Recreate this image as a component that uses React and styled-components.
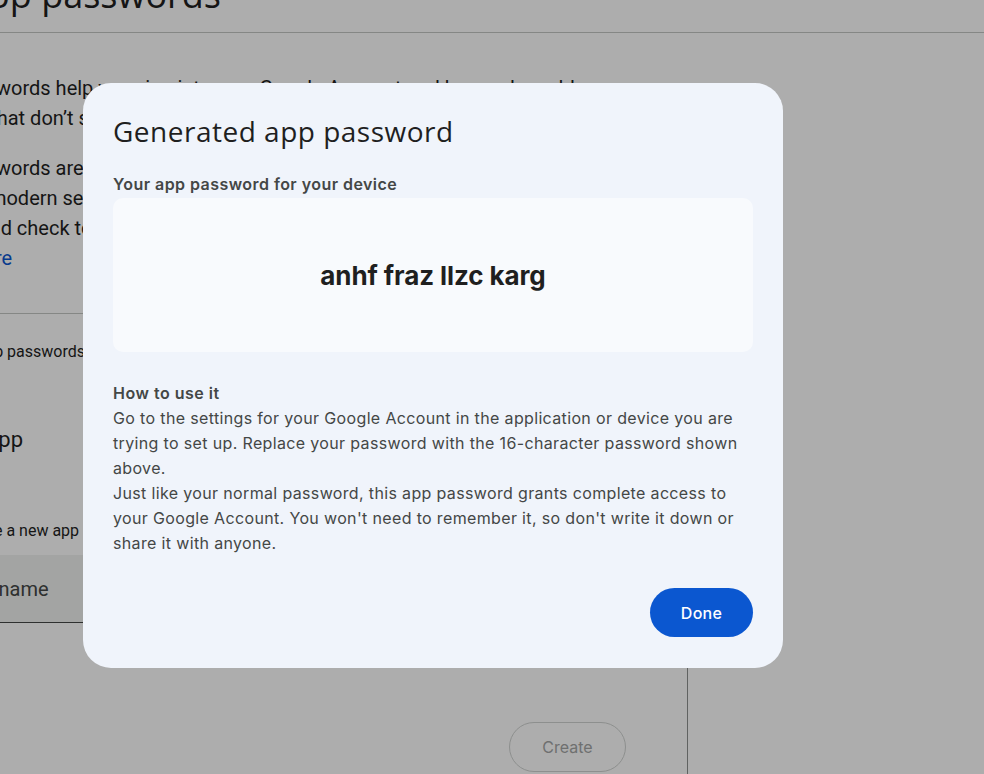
import React from 'react';
import styled, { createGlobalStyle } from 'styled-components';

const GlobalStyle = createGlobalStyle`
  html, body {
    margin: 0;
    padding: 0;
    background: #ffffff;
    overflow: hidden;
  }
  body {
    font-family: Roboto, "Liberation Sans", sans-serif;
    color: #1f1f1f;
  }
`;

const Page = styled.div`
  position: relative;
  width: 984px;
  height: 774px;
  overflow: hidden;
  background: #ffffff;
`;

const Header = styled.header`
  height: 32px;
  border-bottom: 1px solid #c4c7c5;
  display: flex;
  align-items: flex-end;
  margin-left: -35px;
`;

const PageTitle = styled.h1`
  margin: 0 0 19px;
  font-family: "Open Sans", Roboto, sans-serif;
  font-weight: 400;
  font-size: 36px;
  line-height: 36px;
  color: #1f1f1f;
`;

const Main = styled.main`
  width: 688px;
`;

const Intro = styled.section`
  margin-left: -48px;
  padding: 40px 0 0;
  border-bottom: 1px solid #c4c7c5;
  height: 240px;
`;

const Para = styled.p`
  margin: 0 0 20px;
  font-size: 20px;
  line-height: 30px;
  color: #1f1f1f;
  white-space: nowrap;
`;

const Link = styled.a`
  display: inline-block;
  margin-left: 14px;
  color: #0b57d0;
  text-decoration: none;
`;

const Creator = styled.section`
  height: 460px;
  border-right: 1px solid #8e918f;
  display: flex;
  flex-direction: column;
`;

const Shifted = styled.div`
  margin-left: ${(p) => p.$left}px;
  display: flex;
  flex-direction: column;
`;

const SmallLabel = styled.div`
  font-size: 16px;
  line-height: 20px;
  color: #1f1f1f;
  margin-top: ${(p) => p.$top}px;
  white-space: nowrap;
`;

const AppName = styled.div`
  font-size: 22px;
  line-height: 28px;
  margin-top: 64px;
  margin-left: -16px;
`;

const Field = styled.div`
  margin-top: 14px;
  margin-left: -60px;
  width: 560px;
  height: 67px;
  background: #f0f2f1;
  border-bottom: 1px solid #444746;
  display: flex;
  align-items: center;
  padding-left: 18px;
  font-size: 20px;
  color: #444746;
`;

const Actions = styled.div`
  display: flex;
  justify-content: flex-end;
  padding-right: 61px;
  margin-top: 99px;
`;

const CreateButton = styled.button`
  width: 117px;
  height: 50px;
  border-radius: 25px;
  border: 1px solid #d0d3d1;
  background: transparent;
  font-family: Inter, "Open Sans", sans-serif;
  font-size: 16px;
  color: #a4a6a5;
`;

const Overlay = styled.div`
  position: absolute;
  inset: 0;
  background: rgba(0, 0, 0, 0.32);
  padding: 83px 0 0 83px;
  display: flex;
  align-items: flex-start;
`;

const Dialog = styled.div`
  width: 700px;
  box-sizing: border-box;
  padding: 30px 30px 31px;
  background: #f0f4fb;
  border-radius: 28px;
  font-family: Inter, "Open Sans", sans-serif;
  color: #444746;
  display: flex;
  flex-direction: column;
`;

const DialogTitle = styled.h2`
  margin: 0;
  font-family: "Open Sans", Inter, sans-serif;
  font-weight: 400;
  font-size: 28px;
  line-height: 36px;
  letter-spacing: 0.5px;
  color: #1f1f1f;
`;

const Label = styled.div`
  margin-top: 23px;
  font-size: 16px;
  font-weight: 600;
  line-height: 24px;
  color: #444746;
  letter-spacing: 0.45px;
`;

const PasswordBox = styled.div`
  margin-top: 2px;
  height: 154px;
  border-radius: 10px;
  background: #f8fafd;
  display: flex;
  align-items: center;
  justify-content: center;
`;

const Password = styled.span`
  font-size: 26px;
  font-weight: 700;
  color: #1f1f1f;
  letter-spacing: -0.1px;
`;

const HowTitle = styled.div`
  margin-top: 29px;
  font-size: 16px;
  font-weight: 600;
  line-height: 25px;
  color: #444746;
  letter-spacing: 0.5px;
`;

const Body = styled.p`
  margin: 0;
  font-size: 16px;
  line-height: 25px;
  letter-spacing: 0.35px;
  color: #444746;
`;

const Footer = styled.div`
  margin-top: 32px;
  display: flex;
  justify-content: flex-end;
`;

const DoneButton = styled.button`
  width: 103px;
  height: 49px;
  border: none;
  border-radius: 25px;
  background: #0b57d0;
  color: #ffffff;
  font-family: Inter, "Open Sans", sans-serif;
  font-size: 16px;
  font-weight: 500;
  letter-spacing: 0.3px;
`;

export default function App() {
  return (
    <>
      <GlobalStyle />
      <Page>
        <Header>
          <PageTitle>App passwords</PageTitle>
        </Header>
        <Main>
          <Intro>
            <Para>
              Passwords help you sign into your Google Account and be used on older apps
              <br />
              and that don’t support modern security standards.
            </Para>
            <Para>
              Passwords are less secure than using up-to-date apps and services that
              <br />
              use modern security standards. Before you create an app password, you
              <br />
              should check to see if your app needs this in order to sign in.
              <br />
              <Link href="#">more</Link>
            </Para>
          </Intro>
          <Creator>
            <Shifted $left={-60}>
              <SmallLabel $top={28}>Your app passwords</SmallLabel>
            </Shifted>
            <AppName>App</AppName>
            <Shifted $left={-64}>
              <SmallLabel $top={67}>To create a new app specific password, type a name for it below</SmallLabel>
            </Shifted>
            <Field>App name</Field>
            <Actions>
              <CreateButton>Create</CreateButton>
            </Actions>
          </Creator>
        </Main>
        <Overlay>
          <Dialog>
            <DialogTitle>Generated app password</DialogTitle>
            <Label>Your app password for your device</Label>
            <PasswordBox>
              <Password>anhf fraz llzc karg</Password>
            </PasswordBox>
            <HowTitle>How to use it</HowTitle>
            <Body>
              Go to the settings for your Google Account in the application or device you are
              trying to set up. Replace your password with the 16-character password shown
              above.
            </Body>
            <Body>
              Just like your normal password, this app password grants complete access to
              your Google Account. You won't need to remember it, so don't write it down or
              share it with anyone.
            </Body>
            <Footer>
              <DoneButton>Done</DoneButton>
            </Footer>
          </Dialog>
        </Overlay>
      </Page>
    </>
  );
}
